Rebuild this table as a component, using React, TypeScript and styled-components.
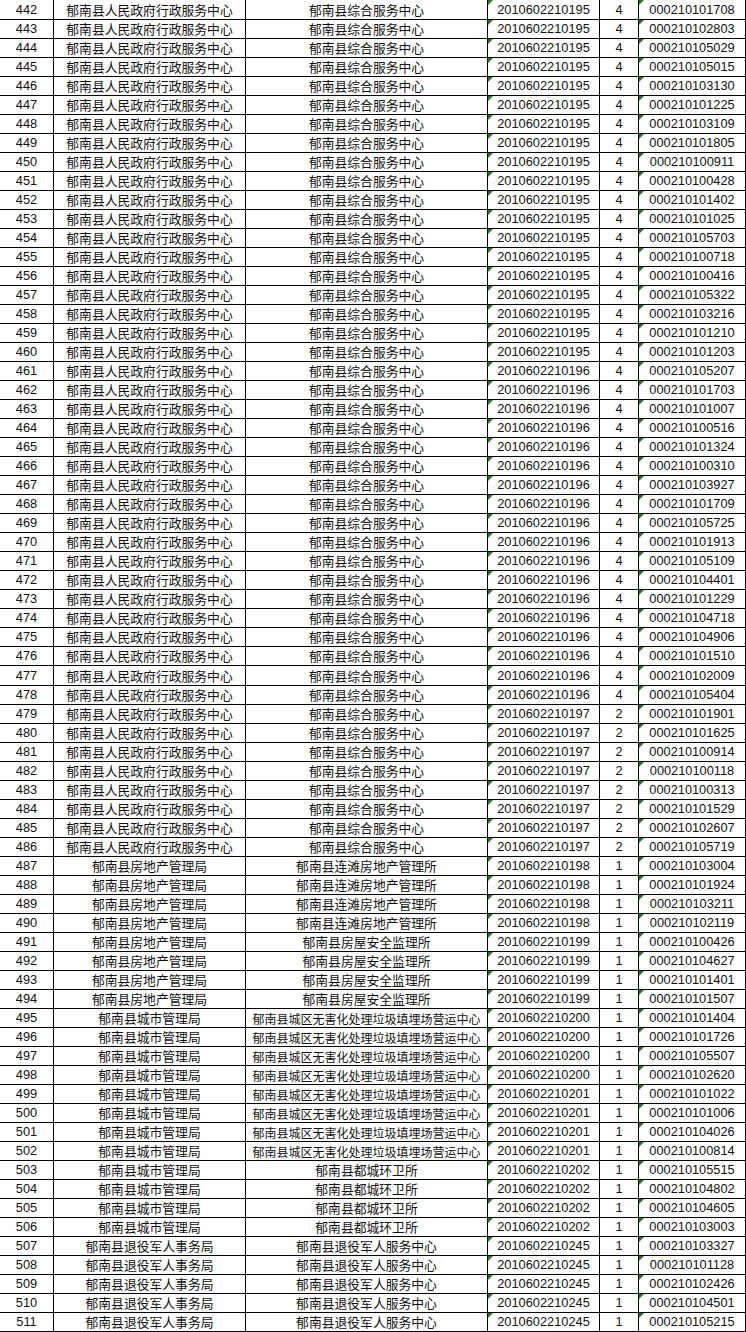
import React from 'react';
import styled, { createGlobalStyle } from 'styled-components';

interface Entry {
  no: number;
  dept: string;
  unit: string;
  code: string;
  count: number;
  ticket: string;
}

const GlobalStyle = createGlobalStyle`
  html, body {
    margin: 0;
    padding: 0;
    background: #fff;
  }
  body {
    font-family: "Liberation Sans", "Noto Sans CJK SC", sans-serif;
    color: #111;
  }
`;

const Sheet = styled.div`
  width: 746px;
  display: flex;
  flex-direction: column;
`;

const Row = styled.div<{ $tall?: boolean }>`
  display: grid;
  grid-template-columns: 54px 192px 242px 112px 39px 107px;
  height: ${(p) => (p.$tall ? 20 : 19)}px;
`;

const Cell = styled.div<{ $flag?: boolean; $cjk?: boolean; $small?: boolean }>`
  position: relative;
  box-sizing: border-box;
  border-right: 1px solid #000;
  border-bottom: 1px solid #000;
  display: flex;
  align-items: center;
  justify-content: center;
  white-space: nowrap;
  overflow: hidden;
  font-family: ${(p) =>
    p.$cjk ? '"Noto Sans CJK SC", sans-serif' : '"Liberation Sans", Arial, sans-serif'};
  font-size: ${(p) => (p.$small ? '12px' : '12.8px')};
  line-height: 1;
  padding-top: 1px;

  ${(p) =>
    p.$flag &&
    `
    &::before {
      content: '';
      position: absolute;
      top: 0;
      left: 0;
      width: 0;
      height: 0;
      border-top: 5px solid #1f7a1f;
      border-right: 5px solid transparent;
    }
  `}
`;

const tickets = [
  '101708', '102803', '105029', '105015', '103130', '101225', '103109', '101805', '100911', '100428',
  '101402', '101025', '105703', '100718', '100416', '105322', '103216', '101210', '101203', '105207',
  '101703', '101007', '100516', '101324', '100310', '103927', '101709', '105725', '101913', '105109',
  '104401', '101229', '104718', '104906', '101510', '102009', '105404', '101901', '101625', '100914',
  '100118', '100313', '101529', '102607', '105719', '103004', '101924', '103211', '102119', '100426',
  '104627', '101401', '101507', '101404', '101726', '105507', '102620', '101022', '101006', '104026',
  '100814', '105515', '104802', '104605', '103003', '103327', '101128', '102426', '104501', '105215',
];

// [rows, dept, unit, code suffix, count]
const groups: [number, string, string, string, number][] = [
  [19, '郁南县人民政府行政服务中心', '郁南县综合服务中心', '195', 4],
  [18, '郁南县人民政府行政服务中心', '郁南县综合服务中心', '196', 4],
  [8, '郁南县人民政府行政服务中心', '郁南县综合服务中心', '197', 2],
  [4, '郁南县房地产管理局', '郁南县连滩房地产管理所', '198', 1],
  [4, '郁南县房地产管理局', '郁南县房屋安全监理所', '199', 1],
  [4, '郁南县城市管理局', '郁南县城区无害化处理垃圾填埋场营运中心', '200', 1],
  [4, '郁南县城市管理局', '郁南县城区无害化处理垃圾填埋场营运中心', '201', 1],
  [4, '郁南县城市管理局', '郁南县都城环卫所', '202', 1],
  [5, '郁南县退役军人事务局', '郁南县退役军人服务中心', '245', 1],
];

const entries: Entry[] = [];
groups.forEach(([n, dept, unit, suffix, count]) => {
  for (let i = 0; i < n; i += 1) {
    const idx = entries.length;
    entries.push({
      no: 442 + idx,
      dept,
      unit,
      code: `2010602210${suffix}`,
      count,
      ticket: `000210${tickets[idx]}`,
    });
  }
});

function App() {
  return (
    <>
      <GlobalStyle />
      <Sheet>
        {entries.map((e, i) => (
          <Row key={e.no} $tall={i === 0 || i === 35}>
            <Cell>{e.no}</Cell>
            <Cell $cjk>{e.dept}</Cell>
            <Cell $cjk $small={e.unit.length > 14}>{e.unit}</Cell>
            <Cell $flag>{e.code}</Cell>
            <Cell>{e.count}</Cell>
            <Cell $flag>{e.ticket}</Cell>
          </Row>
        ))}
      </Sheet>
    </>
  );
}

export default App;
